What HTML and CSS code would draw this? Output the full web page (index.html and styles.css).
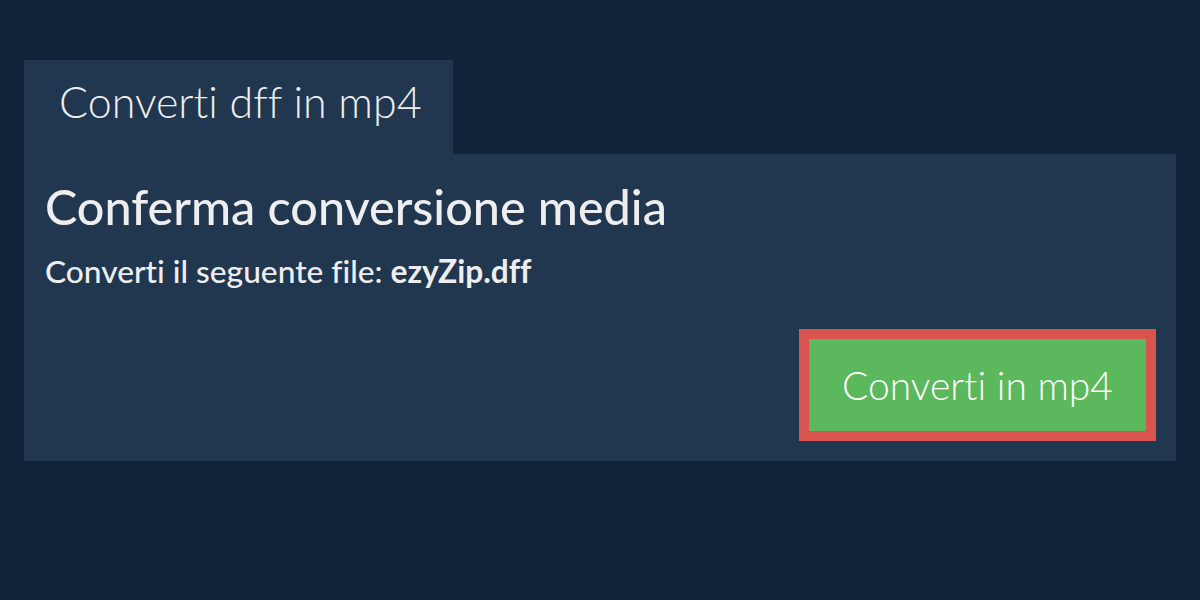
FILE: index.html
```html
<!DOCTYPE html>
<html lang="it">
<head>
<meta charset="utf-8">
<title>Converti dff in mp4</title>
<link rel="stylesheet" href="styles.css">
</head>
<body>
<main class="wrap">
  <div class="tab">Converti dff in mp4</div>
  <section class="panel">
    <h1 class="title">Conferma conversione media</h1>
    <p class="info">Converti il seguente file: <b>ezyZip.dff</b></p>
    <div class="actions">
      <button class="btn">Converti in mp4</button>
    </div>
  </section>
</main>
</body>
</html>
```
FILE: styles.css
```css
html, body {
  margin: 0;
  padding: 0;
  background: #11243a;
  width: 1200px;
  height: 600px;
  font-family: Lato, "Open Sans", sans-serif;
  color: #eeeeee;
  font-variant-ligatures: none;
  font-feature-settings: "liga" 0, "clig" 0, "calt" 0, "dlig" 0;
}
.wrap {
  padding: 60px 24px 0 24px;
}
.tab {
  display: inline-block;
  background: #21364f;
  font-weight: 300;
  font-size: 43px;
  line-height: 84px;
  height: 94px;
  padding: 0 0 10px 35px;
  box-sizing: border-box;
  width: 429px;
}
.panel {
  background: #21364f;
  padding: 24px 20px 20px 21px;
  height: 307px;
  box-sizing: border-box;
  display: flex;
  flex-direction: column;
}
.title {
  margin: 0;
  font-size: 48.5px;
  font-weight: 500;
  line-height: 56px;
}
.info {
  margin: 20px 0 0 0;
  font-size: 31.7px;
  line-height: 34px;
  font-weight: 500;
}
.info b {
  font-weight: 700;
}
.actions {
  margin-top: auto;
  display: flex;
  justify-content: flex-end;
}
.btn {
  font-family: inherit;
  font-weight: 300;
  font-size: 39px;
  color: #ffffff;
  background: #5cb85c;
  border: 10px solid #d9534f;
  width: 357px;
  height: 112px;
  padding: 0;
  cursor: pointer;
  font-variant-ligatures: none;
  font-feature-settings: "liga" 0, "clig" 0, "calt" 0, "dlig" 0;
}
```
